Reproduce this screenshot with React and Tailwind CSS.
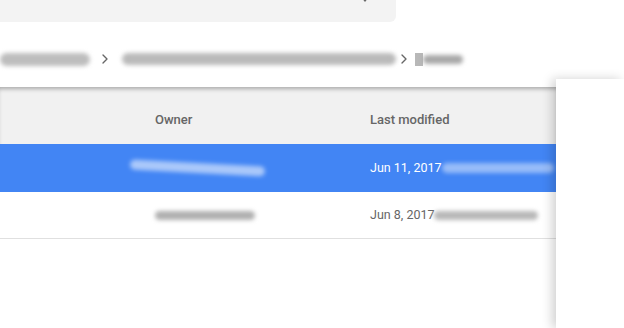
import { ChevronRight } from "lucide-react";

function Smudge({ className }) {
  return <div className={"shrink-0 rounded-full blur-[2px] " + className} />;
}

export default function App() {
  return (
    <div className="relative w-[624px] h-[328px] overflow-hidden bg-white font-['Roboto',sans-serif]">
      {/* search box */}
      <div className="relative w-[396px] h-[22px] bg-[#f3f3f3] rounded-br-[6px]">
        <div className="absolute left-[361px] -top-[3px] w-0 h-0 border-x-[4px] border-x-transparent border-t-[5px] border-t-[#666]" />
      </div>

      {/* breadcrumbs */}
      <div className="flex items-center h-[65px] pt-[9px]">
        <Smudge className="w-[90px] h-[13px] bg-[#bdbdbd]" />
        <ChevronRight className="ml-[7px] w-[16px] h-[16px] text-[#666]" strokeWidth={2} />
        <Smudge className="ml-[9px] w-[274px] h-[12px] bg-[#bababa]" />
        <ChevronRight className="ml-[0px] w-[16px] h-[16px] text-[#666]" strokeWidth={2} />
        <div className="ml-[3px] flex items-center">
          <div className="w-[8px] h-[13px] bg-[#b8b8b8] blur-[0.6px]" />
          <Smudge className="w-[40px] h-[9px] bg-[#a8a8a8]" />
        </div>
      </div>

      {/* table */}
      <div className="w-[556px]">
        <div className="flex items-center h-[57px] pt-[8px] bg-[#f1f1f1] shadow-[inset_0_4px_4px_-2px_rgba(0,0,0,0.3)] text-[13px] font-medium text-[#666]">
          <div className="pl-[155px] w-[370px]">Owner</div>
          <div className="whitespace-nowrap">Last modified</div>
        </div>
        <div className="flex items-center h-[48px] bg-[#4285f4] text-[12.5px] text-white">
          <div className="w-[370px] shrink-0 pl-[130px]">
            <Smudge className="w-[135px] h-[10px] bg-white/55 rotate-[3deg]" />
          </div>
          <div className="flex items-center whitespace-nowrap">
            <span>Jun 11, 2017</span>
            <Smudge className="w-[112px] h-[10px] bg-white/45" />
          </div>
        </div>
        <div className="flex items-center h-[47px] border-b border-[#e0e0e0] text-[12.5px] text-[#666]">
          <div className="w-[370px] shrink-0 pl-[155px]">
            <Smudge className="w-[100px] h-[9px] bg-[#b0b0b0]" />
          </div>
          <div className="flex items-center whitespace-nowrap">
            <span>Jun 8, 2017</span>
            <Smudge className="w-[104px] h-[9px] bg-[#b8b8b8]" />
          </div>
        </div>
      </div>

      {/* side panel */}
      <div className="absolute left-[556px] top-[79px] bottom-0 w-[68px] bg-white shadow-[-4px_0_10px_rgba(0,0,0,0.18)]" />
    </div>
  );
}
